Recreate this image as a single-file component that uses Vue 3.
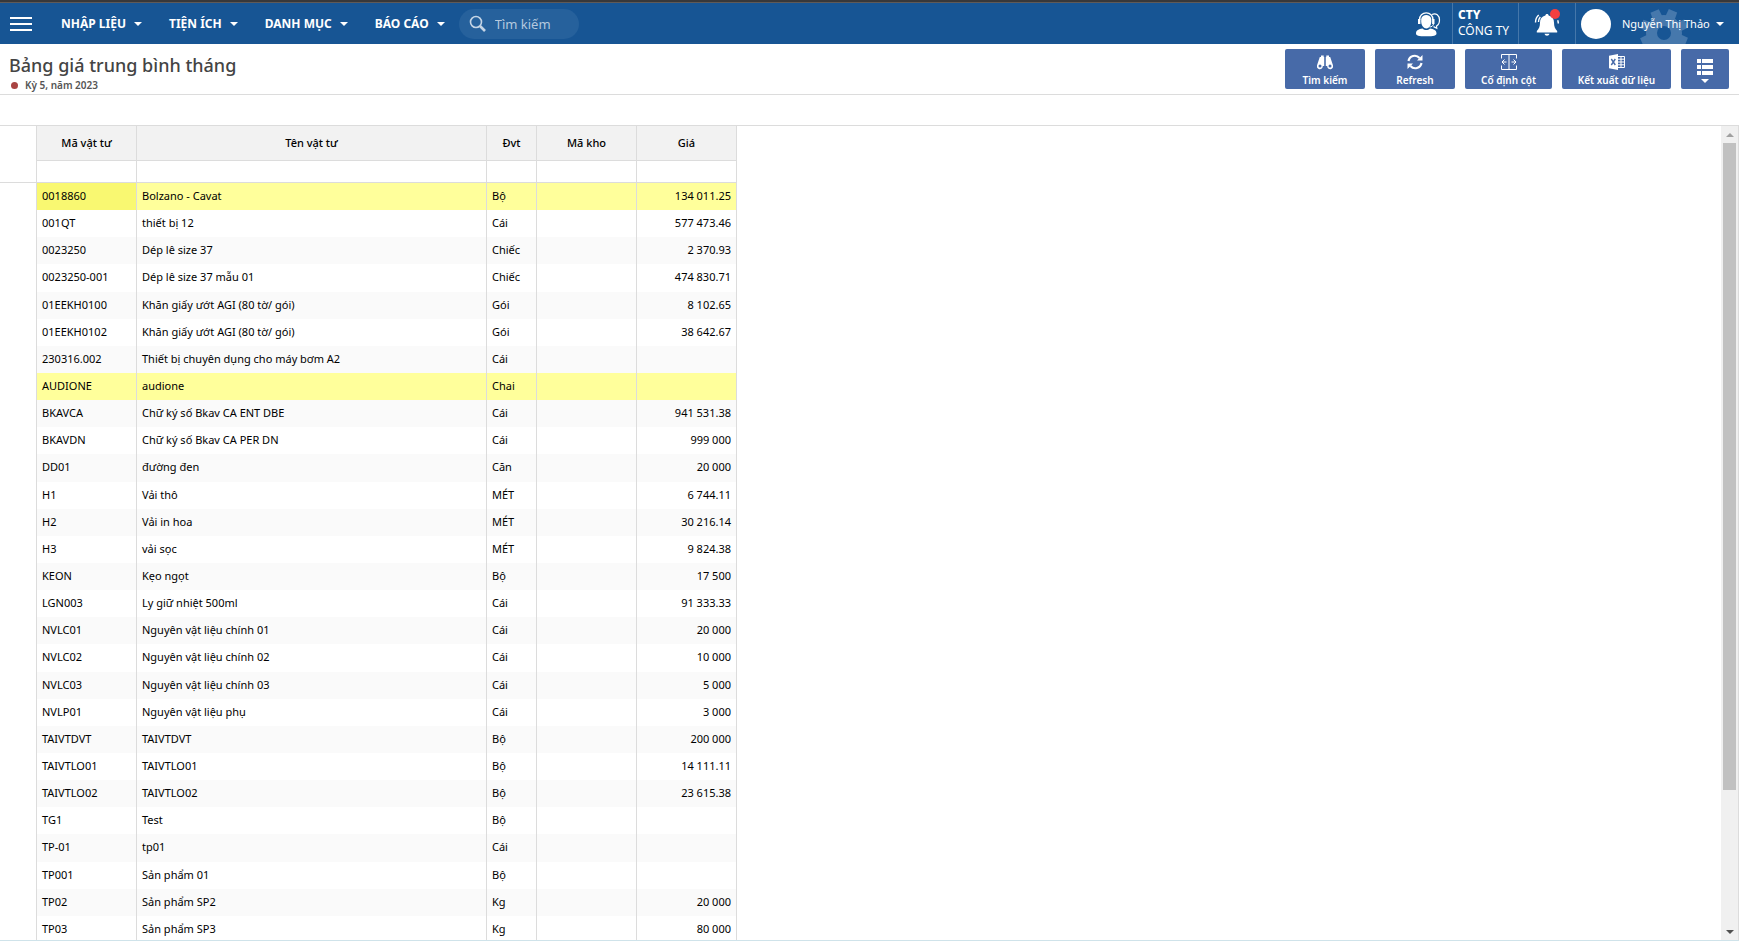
<script setup>
const menus = ['NHẬP LIỆU', 'TIỆN ÍCH', 'DANH MỤC', 'BÁO CÁO']

const columns = ['Mã vật tư', 'Tên vật tư', 'Đvt', 'Mã kho', 'Giá']

const rows = [
  ['0018860', 'Bolzano - Cavat', 'Bộ', '134 011.25'],
  ['001QT', 'thiết bị 12', 'Cái', '577 473.46'],
  ['0023250', 'Dép lê size 37', 'Chiếc', '2 370.93'],
  ['0023250-001', 'Dép lê size 37 mẫu 01', 'Chiếc', '474 830.71'],
  ['01EEKH0100', 'Khăn giấy ướt AGI (80 tờ/ gói)', 'Gói', '8 102.65'],
  ['01EEKH0102', 'Khăn giấy ướt AGI (80 tờ/ gói)', 'Gói', '38 642.67'],
  ['230316.002', 'Thiết bị chuyên dụng cho máy bơm A2', 'Cái', ''],
  ['AUDIONE', 'audione', 'Chai', ''],
  ['BKAVCA', 'Chữ ký số Bkav CA ENT DBE', 'Cái', '941 531.38'],
  ['BKAVDN', 'Chữ ký số Bkav CA PER DN', 'Cái', '999 000'],
  ['DD01', 'đường đen', 'Căn', '20 000'],
  ['H1', 'Vải thô', 'MÉT', '6 744.11'],
  ['H2', 'Vải in hoa', 'MÉT', '30 216.14'],
  ['H3', 'vải sọc', 'MÉT', '9 824.38'],
  ['KEON', 'Kẹo ngọt', 'Bộ', '17 500'],
  ['LGN003', 'Ly giữ nhiệt 500ml', 'Cái', '91 333.33'],
  ['NVLC01', 'Nguyên vật liệu chính 01', 'Cái', '20 000'],
  ['NVLC02', 'Nguyên vật liệu chính 02', 'Cái', '10 000'],
  ['NVLC03', 'Nguyên vật liệu chính 03', 'Cái', '5 000'],
  ['NVLP01', 'Nguyên vật liệu phụ', 'Cái', '3 000'],
  ['TAIVTDVT', 'TAIVTDVT', 'Bộ', '200 000'],
  ['TAIVTLO01', 'TAIVTLO01', 'Bộ', '14 111.11'],
  ['TAIVTLO02', 'TAIVTLO02', 'Bộ', '23 615.38'],
  ['TG1', 'Test', 'Bộ', ''],
  ['TP-01', 'tp01', 'Cái', ''],
  ['TP001', 'Sản phẩm 01', 'Bộ', ''],
  ['TP02', 'Sản phẩm SP2', 'Kg', '20 000'],
  ['TP03', 'Sản phẩm SP3', 'Kg', '80 000'],
]
const highlighted = new Set(['0018860', 'AUDIONE'])
const selected = '0018860'
</script>

<template>
  <div class="app">
    <header class="topbar">
      <button class="burger" type="button" aria-label="Menu"><i></i><i></i><i></i></button>
      <nav class="menu">
        <button v-for="m in menus" :key="m" type="button">{{ m }}<span class="caret"></span></button>
      </nav>
      <label class="search">
        <svg width="18" height="18" viewBox="0 0 18 18" fill="none" stroke="currentColor">
          <circle cx="7" cy="7" r="5.5" stroke-width="1.6" />
          <path d="M11 11l5 5" stroke-width="2.6" />
        </svg>
        <input type="text" placeholder="Tìm kiếm" aria-label="Tìm kiếm" />
      </label>
      <div class="account">
        <button class="support" type="button" aria-label="Hỗ trợ">
          <svg width="26" height="26" viewBox="0 0 26 26" fill="none" stroke="#fff">
            <path d="M17 3.500C21 1.500 24.500 4.500 24.500 9c0 3-1 5-3 6l.3 2.200-3.300-1.600" stroke-width="1.200" />
            <path d="M4.500 9C4-.5 18.500-.5 18 9" stroke-width="1.400" />
            <path d="M6.200 8C7 2.500 15.500 2.500 16.300 8v2.500c0 4-2.500 7-5 7s-5.100-3-5.100-7z" fill="#fff" stroke="none" />
            <path d="M3 8h2.400v5H3zM17.100 8h2.400v5h-2.400z" fill="#fff" stroke="none" />
            <path d="M18.500 12.500c0 2.500-2 3.500-4 3.500" stroke-width="1" />
            <path d="M1 22.500c0-3.500 3-4.500 6.500-5 2.300 2 5.200 2 7.500 0 3.500.5 6.500 1.500 6.500 5 0 2-2.500 2.800-10.300 2.800S1 24.500 1 22.500z" fill="#fff" stroke="none" />
          </svg>
        </button>
        <div class="company"><b>CTY</b><span>CÔNG TY</span></div>
        <button class="bell" type="button" aria-label="Thông báo">
          <svg width="26" height="26" viewBox="0 0 26 26">
            <path d="M13 3c1 0 1.600.7 1.600 1.600 3.600.7 5.400 3.400 5.400 7 0 4.400 1 6.300 3.200 8.400v1.500H2.800V20C5 17.900 6 16 6 11.600c0-3.600 1.800-6.300 5.400-7C11.400 3.700 12 3 13 3zM10.500 22.800h5c-.3 1.300-1.300 2-2.500 2s-2.200-.7-2.500-2z" fill="#fff" />
            <path d="M1.500 11.500c0-3 1-5.500 3.200-7.500M4.500 11c0-2 .6-3.600 1.800-5" fill="none" stroke="#fff" stroke-width="1.400" />
            <path d="M24.300 12.500c0-1.300-.2-2.300-.6-3.300" fill="none" stroke="#fff" stroke-width="1.500" />
          </svg>
          <span class="badge"></span>
        </button>
        <button class="user" type="button">
          <svg class="gear" width="50" height="50" viewBox="-25 -25 50 50">
            <g fill="#4678ac">
              <path v-for="a in 8" :key="a" d="M-5-15-4.500-24h9L5-15z" :transform="`rotate(${a * 45 + 22})`" />
              <path fill-rule="evenodd" d="M-18 0a18 18 0 1 1 36 0a18 18 0 1 1-36 0zM-7 0a7 7 0 1 0 14 0a7 7 0 1 0-14 0z" />
            </g>
          </svg>
          <span class="avatar"></span>
          <span class="name">Nguyễn Thị Thảo</span>
          <span class="caret"></span>
        </button>
      </div>
    </header>

    <section class="heading">
      <div>
        <h1>Bảng giá trung bình tháng</h1>
        <p><i></i>Kỳ 5, năm 2023</p>
      </div>
      <div class="tools">
        <button class="w80" type="button">
          <svg width="16" height="16" viewBox="0 0 16 16" fill="#fff">
            <path d="M4 1.500h2.700V3h.5v9H5.800A3 3 0 1 1 .2 10.800L2.800 3H4zM12 1.500H9.300V3h-.5v9h1.400a3 3 0 1 0 5.600-1.200L13.200 3H12z" />
            <circle cx="3" cy="12" r="1.500" fill="#476aa8" />
            <circle cx="13" cy="12" r="1.500" fill="#476aa8" />
          </svg>
          Tìm kiếm
        </button>
        <button class="w80" type="button">
          <svg width="16" height="16" viewBox="0 0 16 16" fill="none" stroke="#fff" stroke-width="2.200">
            <path d="M1.500 7A6.300 6.300 0 0 1 12.500 4M14.500 9A6.300 6.300 0 0 1 3.500 12" />
            <path d="M15.500 1v5.500H10zM.5 15V9.500H6z" fill="#fff" stroke="none" />
          </svg>
          Refresh
        </button>
        <button class="w87" type="button">
          <svg width="16" height="16" viewBox="0 0 16 16" fill="none" stroke="#fff" stroke-width="1">
            <path d="M.5 4.500v-4h15v4M.5 11.500v4h15v-4M8 .5v15M5.500 8H1M3.500 5.500 1 8l2.500 2.500M10.500 8H15M12.500 5.500 15 8l-2.500 2.500" />
          </svg>
          Cố định cột
        </button>
        <button class="w109" type="button">
          <svg width="16" height="16" viewBox="0 0 16 16">
            <path d="M0 1.800 9 0v16L0 14.200z" fill="#fff" />
            <path d="M2.300 5l4 6M6.300 5l-4 6" stroke="#476aa8" stroke-width="1.400" />
            <path d="M9 2.500h6.500v11H9M9 5.200h6M9 8h6M9 10.800h6M12 2.500v11" fill="none" stroke="#fff" />
          </svg>
          Kết xuất dữ liệu
        </button>
        <button class="w48" type="button" aria-label="Tùy chọn">
          <svg width="16" height="16" viewBox="0 0 16 16" fill="#fff">
            <path d="M0 0h4v4H0zM5 0h11v4H5zM0 6h4v4H0zM5 6h11v4H5zM0 12h4v4H0zM5 12h11v4H5z" />
          </svg>
          <span class="caret"></span>
        </button>
      </div>
    </section>

    <main class="grid">
      <div class="sheet">
        <table>
          <colgroup>
            <col class="c-no" /><col class="c-code" /><col class="c-name" /><col class="c-unit" /><col class="c-code" /><col class="c-code" />
          </colgroup>
          <thead>
            <tr class="titles">
              <td></td>
              <th v-for="c in columns" :key="c" scope="col">{{ c }}</th>
            </tr>
            <tr class="filters">
              <td></td>
              <td v-for="c in columns" :key="c"></td>
            </tr>
          </thead>
          <tbody>
            <tr v-for="r in rows" :key="r[0]" :class="{ mark: highlighted.has(r[0]) }">
              <td></td>
              <td :class="{ current: r[0] === selected }">{{ r[0] }}</td>
              <td>{{ r[1] }}</td>
              <td>{{ r[2] }}</td>
              <td></td>
              <td class="num">{{ r[3] }}</td>
            </tr>
          </tbody>
        </table>
      </div>
      <div class="scroll" aria-hidden="true">
        <span class="up"></span>
        <div class="track"><div class="thumb"></div></div>
        <span class="down"></span>
      </div>
    </main>
  </div>
</template>

<style>
body { background: #fff; }
</style>

<style scoped>
* { box-sizing: border-box; }
.app {
  display: flex;
  flex-direction: column;
  height: 100vh;
  overflow: hidden;
  border-bottom: 1px solid #cfe3ea;
  font: 11px/16px "Noto Sans", "Open Sans", sans-serif;
  color: #000;
}
button, input { font: inherit; color: inherit; border: 0; padding: 0; margin: 0; background: none; }
svg { display: block; flex: none; }
.caret { display: inline-block; border: 4px solid transparent; border-top-color: currentColor; border-bottom: 0; }

.topbar {
  display: flex;
  align-items: center;
  flex: none;
  height: 44px;
  border-top: 2px solid #38383a;
  padding-top: 1px;
  padding-left: 10px;
  background: #175594;
  box-shadow: inset 0 1px #5f5a58;
  color: #fff;
}
.burger { display: flex; flex-direction: column; gap: 4px; width: 22px; margin-right: 29px; }
.burger i { height: 2px; background: #fff; }
.menu { display: flex; gap: 27px; }
.menu button { display: flex; align-items: center; gap: 8px; font-size: 12px; font-weight: 700; white-space: nowrap; }
.search {
  display: flex;
  align-items: center;
  gap: 8px;
  width: 120px;
  height: 30px;
  margin-left: 14px;
  padding: 0 10px;
  border-radius: 15px;
  background: #26619c;
  color: #c5d5e6;
}
.search input { width: 70px; font-size: 13px; outline: 0; }
.search input::placeholder { color: #b4c9df; opacity: 1; }
.account { display: flex; align-self: stretch; margin-left: auto; }
.account > * { display: flex; align-items: center; }
.support { padding-right: 11px; }
.company { flex-direction: column; width: 67px; padding: 4px 0 0 5px; border: solid #4577aa; border-width: 0 1px; font-size: 12px; line-height: 16px; }
.company b { font-weight: 800; }
.account .company { align-items: flex-start; }
.bell { position: relative; width: 57px; padding-left: 15px; border-right: 1px solid #4577aa; }
.badge { position: absolute; top: 6px; left: 31px; width: 10px; height: 10px; border-radius: 50%; background: #f43f3f; }
.user { position: relative; padding: 0 15px 0 5px; overflow: hidden; }
.gear { position: absolute; top: 5px; right: 50px; }
.avatar { position: relative; width: 30px; height: 30px; border-radius: 50%; background: #fff; }
.name { position: relative; width: 90px; margin: 0 4px 0 11px; text-align: left; white-space: nowrap; }

.heading {
  display: flex;
  justify-content: space-between;
  flex: none;
  height: 51px;
  padding: 5px 10px 0 9px;
  border-bottom: 1px solid #dcdcdc;
}
h1 { margin: 4px 0 0; font-size: 18px; line-height: 25px; font-weight: 500; color: #444; }
p { display: flex; align-items: center; gap: 7px; margin: 0; font-size: 10px; line-height: 14px; font-weight: 600; color: #555; }
p i { width: 7px; height: 7px; margin-left: 2px; border-radius: 50%; background: #a94442; }
.tools { display: flex; gap: 10px; height: 40px; }
.tools button {
  display: flex;
  flex-direction: column;
  align-items: center;
  gap: 2px;
  padding-top: 5px;
  border-radius: 2px;
  background: #476aa8;
  color: #fff;
  font-size: 10px;
  font-weight: 600;
  white-space: nowrap;
}
.tools .w80 { width: 80px; }
.tools .w87 { width: 87px; }
.tools .w109 { width: 109px; }
.tools .w48 { width: 48px; gap: 4px; padding-top: 10px; }

.grid {
  display: flex;
  flex: 1;
  min-height: 0;
  margin-top: 30px;
  border-top: 1px solid #dcdcdc;
  border-right: 1px solid #dcdcdc;
}
.sheet { flex: 1; overflow: hidden; }
table { width: 737px; table-layout: fixed; border-collapse: separate; border-spacing: 0; }
.c-no { width: 37px; }
.c-code { width: 100px; }
.c-name { width: 350px; }
.c-unit { width: 50px; }
td, th { padding: 0 5px; border-right: 1px solid #dcdcdc; text-align: left; white-space: nowrap; overflow: hidden; }
.titles th { height: 35px; border-bottom: 1px solid #dcdcdc; background: #f2f2f2; text-align: center; font-weight: 500; }
.filters td { height: 22px; border-bottom: 1px solid #dcdcdc; }
tbody tr { height: 27px; }
tbody tr:nth-child(7n + 4) { height: 28px; }
tbody td { padding-bottom: 2px; }
tbody tr:nth-child(odd) td:not(:first-child) { background: #fafafa; }
tbody tr.mark td:not(:first-child) { background: #ffff9b; }
tbody tr.mark td.current:not(:first-child) { background: #f9f871; }
.num { text-align: right; }

.scroll { display: flex; flex-direction: column; align-items: center; width: 17px; background: #f0f0f0; }
.up, .down { flex: none; width: 8px; margin: 7px 0 6px; border: 4px solid transparent; }
.up { border-bottom-color: #a0a0a0; border-top: 0; }
.down { border-top-color: #505050; border-bottom: 0; }
.track { flex: 1; width: 13px; }
.thumb { height: 83%; background: #c1c1c1; }
</style>
